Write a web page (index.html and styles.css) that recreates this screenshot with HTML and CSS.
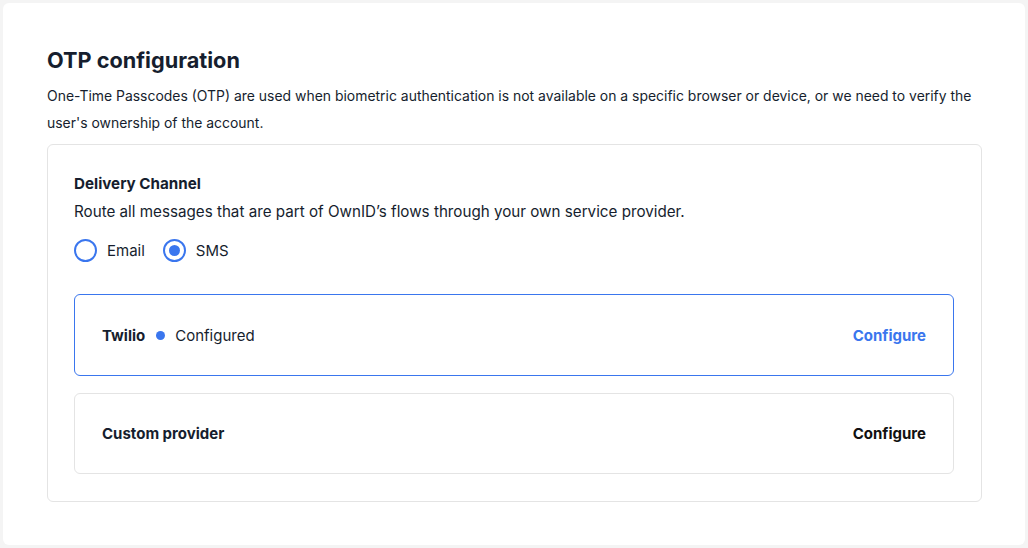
FILE: index.html
```html
<!DOCTYPE html>
<html lang="en">
<head>
    <meta charset="UTF-8">
    <title>OTP configuration</title>
    <link rel="stylesheet" href="styles.css">
</head>
<body>
<div class="card">
    <h1 class="title">OTP configuration</h1>
    <p class="desc">One-Time Passcodes (OTP) are used when biometric authentication is not available on a specific browser or device, or we need to verify the user's ownership of the account.</p>
    <div class="panel">
        <div class="label">Delivery Channel</div>
        <div class="hint">Route all messages that are part of OwnID’s flows through your own service provider.</div>
        <div class="radios">
            <label class="radio"><span class="circle"></span>Email</label>
            <label class="radio checked"><span class="circle"></span>SMS</label>
        </div>
        <div class="provider active">
            <div class="name">Twilio <span class="dot"></span><span class="status">Configured</span></div>
            <span class="link">Configure</span>
        </div>
        <div class="provider">
            <div class="name">Custom provider</div>
            <span class="link">Configure</span>
        </div>
    </div>
</div>
</body>
</html>
```

FILE: styles.css
```css
* {
    margin: 0;
    padding: 0;
    box-sizing: border-box;
}

body {
    background: #f4f4f4;
    font-family: "Inter", "Liberation Sans", sans-serif;
    color: #161e2e;
    padding: 3px;
}

.card {
    background: #fff;
    border-radius: 6px;
    height: 542px;
    padding: 43px 43px 0 44px;
}

.title {
    font-size: 21.7px;
    font-weight: 700;
    line-height: 28px;
}

.desc {
    margin-top: 8px;
    font-size: 13.95px;
    line-height: 27px;
}

.panel {
    margin-top: 8px;
    border: 1px solid #e4e4e4;
    border-radius: 6px;
    padding: 28px 27px 27px 26px;
}

.label {
    font-size: 15.2px;
    font-weight: 700;
    line-height: 22px;
}

.hint {
    margin-top: 6px;
    font-size: 15.2px;
    line-height: 22px;
}

.radios {
    display: flex;
    gap: 18px;
    margin-top: 16px;
}

.radio {
    display: flex;
    align-items: center;
    gap: 10px;
    font-size: 15px;
    line-height: 23px;
}

.circle {
    width: 23px;
    height: 23px;
    border: 2px solid #3a76ee;
    border-radius: 50%;
    display: flex;
    align-items: center;
    justify-content: center;
}

.checked .circle::after {
    content: "";
    width: 11px;
    height: 11px;
    border-radius: 50%;
    background: #3a76ee;
}

.provider {
    display: flex;
    justify-content: space-between;
    align-items: center;
    height: 81px;
    padding: 0 27px;
    border: 1px solid #e4e4e4;
    border-radius: 6px;
    margin-top: 17px;
    font-size: 15px;
}

.provider.active {
    margin-top: 32px;
    border-color: #3a76ee;
    height: 82px;
}

.name {
    font-weight: 700;
    display: flex;
    align-items: center;
}

.dot {
    width: 9px;
    height: 9px;
    border-radius: 50%;
    background: #3a76ee;
    margin: 0 10px 0 11px;
}

.status {
    font-weight: 400;
    font-size: 15px;
}

.link {
    font-weight: 700;
    color: #111;
}

.active .link {
    color: #3a76ee;
}
```
